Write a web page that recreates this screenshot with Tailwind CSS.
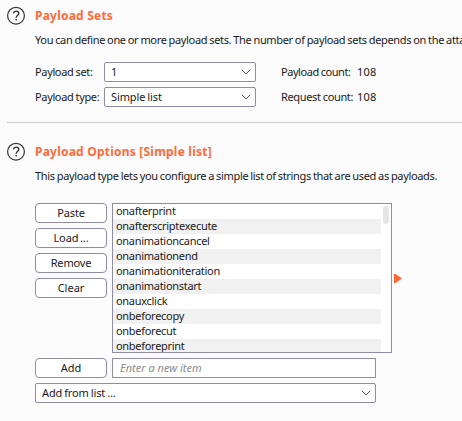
<!DOCTYPE html>
<html lang="en">
<head>
<meta charset="utf-8">
<title>Payload Sets</title>
<script src="https://cdn.jsdelivr.net/npm/@tailwindcss/browser@4"></script>
</head>
<body class="h-[421px] w-[462px] overflow-hidden bg-[#fbfbfb] font-['Noto_Sans',sans-serif] text-[11px] leading-[20px] text-[#1a1a1a] whitespace-nowrap">
<section class="flex h-[122px] pl-[7px] pt-[6px]">
  <svg class="h-[19px] w-[19px] shrink-0" viewBox="0 0 19 19" fill="none" stroke="#333" stroke-width="1.2"><circle cx="9" cy="9.7" r="8.4"/><path d="M6.5 7.3C6.8 5.8 7.8 5.1 9.2 5.1C10.7 5.1 11.8 6 11.8 7.4C11.8 9.3 9.2 9.2 9.2 11.8" stroke-width="1.3"/><path d="M9.2 13v1.5" stroke-width="1.4"/></svg>
  <div class="ml-[9px] w-[427px] shrink-0 overflow-hidden">
    <h2 class="h-[20px] text-[12px] font-bold tracking-[0.22px] leading-[19px] text-[#ff6b3a]"><span>Payload Sets</span></h2>
    <p class="mt-[4px] h-[20px] tracking-[-0.34px] [word-spacing:-0.45px]">You can define one or more payload sets. The number of payload sets depends on the attack</p>
    <div class="mt-[12px] flex h-[20px]">
      <span class="w-[69px] tracking-[-0.35px] [word-spacing:-0.4px]">Payload set:</span>
      <div class="flex w-[152px] items-center justify-between rounded-[2px] border border-[#8f8ca3] bg-white pl-[6px] pr-[4px] leading-[18px]"><span>1</span><svg class="h-[6px] w-[10px]" viewBox="0 0 10 6" fill="none" stroke="#555"><path d="M.7 .7L5 5L9.3 .7"/></svg></div>
      <span class="ml-[25px] w-[76px] tracking-[-0.45px] [word-spacing:-0.4px]">Payload count:</span><span class="tracking-[0.2px]">108</span>
    </div>
    <div class="mt-[5px] flex h-[20px]">
      <span class="w-[69px] tracking-[-0.35px] [word-spacing:-0.4px]">Payload type:</span>
      <div class="flex w-[152px] items-center justify-between rounded-[2px] border border-[#8f8ca3] bg-white pl-[6px] pr-[4px] leading-[18px]"><span class="tracking-[-0.1px] [word-spacing:-0.8px]">Simple list</span><svg class="h-[6px] w-[10px]" viewBox="0 0 10 6" fill="none" stroke="#555"><path d="M.7 .7L5 5L9.3 .7"/></svg></div>
      <span class="ml-[25px] w-[76px] tracking-[-0.35px] [word-spacing:-0.4px]">Request count:</span><span class="tracking-[0.2px]">108</span>
    </div>
  </div>
</section>
<div class="ml-[7px] h-px bg-[#cdcdcd]"></div>
<section class="flex pl-[7px] pt-[19px]">
  <svg class="h-[19px] w-[19px] shrink-0" viewBox="0 0 19 19" fill="none" stroke="#333" stroke-width="1.2"><circle cx="9" cy="9.7" r="8.4"/><path d="M6.5 7.3C6.8 5.8 7.8 5.1 9.2 5.1C10.7 5.1 11.8 6 11.8 7.4C11.8 9.3 9.2 9.2 9.2 11.8" stroke-width="1.3"/><path d="M9.2 13v1.5" stroke-width="1.4"/></svg>
  <div class="ml-[9px] w-[427px] shrink-0">
    <h2 class="h-[20px] text-[12px] font-bold tracking-[0.22px] leading-[19px] text-[#ff6b3a]"><span>Payload Options [Simple list]</span></h2>
    <p class="mt-[4px] h-[20px] tracking-[-0.34px] [word-spacing:-0.45px]"><span>This payload type lets you configure a simple list of strings that are used as payloads.</span></p>
    <div class="mt-[17px] flex h-[150px]">
      <div class="flex w-[72px] flex-col gap-[5px] text-center leading-[18px]">
        <button class="h-[20px] rounded-[4px] border border-[#8f8ca3] bg-white tracking-[-0.15px]">Paste</button>
        <button class="h-[20px] rounded-[4px] border border-[#8f8ca3] bg-white tracking-[-0.1px] [word-spacing:-1.1px]">Load ...</button>
        <button class="h-[20px] rounded-[4px] border border-[#8f8ca3] bg-white tracking-[-0.15px]">Remove</button>
        <button class="h-[20px] rounded-[4px] border border-[#8f8ca3] bg-white">Clear</button>
      </div>
      <div class="ml-[5px] flex w-[280px] overflow-hidden border border-[#8f8ca3] bg-white">
        <ul class="w-[268px] leading-[13px] tracking-[-0.29px] *:h-[15px] *:pl-[3px] *:even:bg-[#f1f1f1]">
          <li>onafterprint</li><li>onafterscriptexecute</li><li>onanimationcancel</li><li>onanimationend</li><li>onanimationiteration</li><li>onanimationstart</li><li>onauxclick</li><li>onbeforecopy</li><li>onbeforecut</li><li>onbeforeprint</li>
        </ul>
        <div class="ml-[2px] mt-[2px] h-[18px] w-[6px] rounded-full bg-[#e5e5e5]"></div>
      </div>
      <svg class="ml-[2px] mt-[71px] h-[9px] w-[8px]" viewBox="0 0 8 9" fill="#ff6633"><path d="M0 0H1.5L8 4.5L1.5 9H0Z"/></svg>
    </div>
    <div class="mt-[5px] flex h-[20px] leading-[18px]">
      <button class="w-[72px] rounded-[4px] border border-[#8f8ca3] bg-white">Add</button>
      <div class="ml-[5px] w-[264px] border border-[#8f8ca3] bg-white pl-[7px] italic text-[#8c8c8c]">Enter a new item</div>
    </div>
    <div class="mt-[5px] flex h-[20px] w-[341px] items-center justify-between rounded-[2px] border border-[#8f8ca3] bg-white pl-[6px] pr-[4px] leading-[18px]"><span class="tracking-[-0.15px] [word-spacing:-0.6px]">Add from list ...</span><svg class="h-[6px] w-[10px]" viewBox="0 0 10 6" fill="none" stroke="#555"><path d="M.7 .7L5 5L9.3 .7"/></svg></div>
  </div>
</section>
</body>
</html>
